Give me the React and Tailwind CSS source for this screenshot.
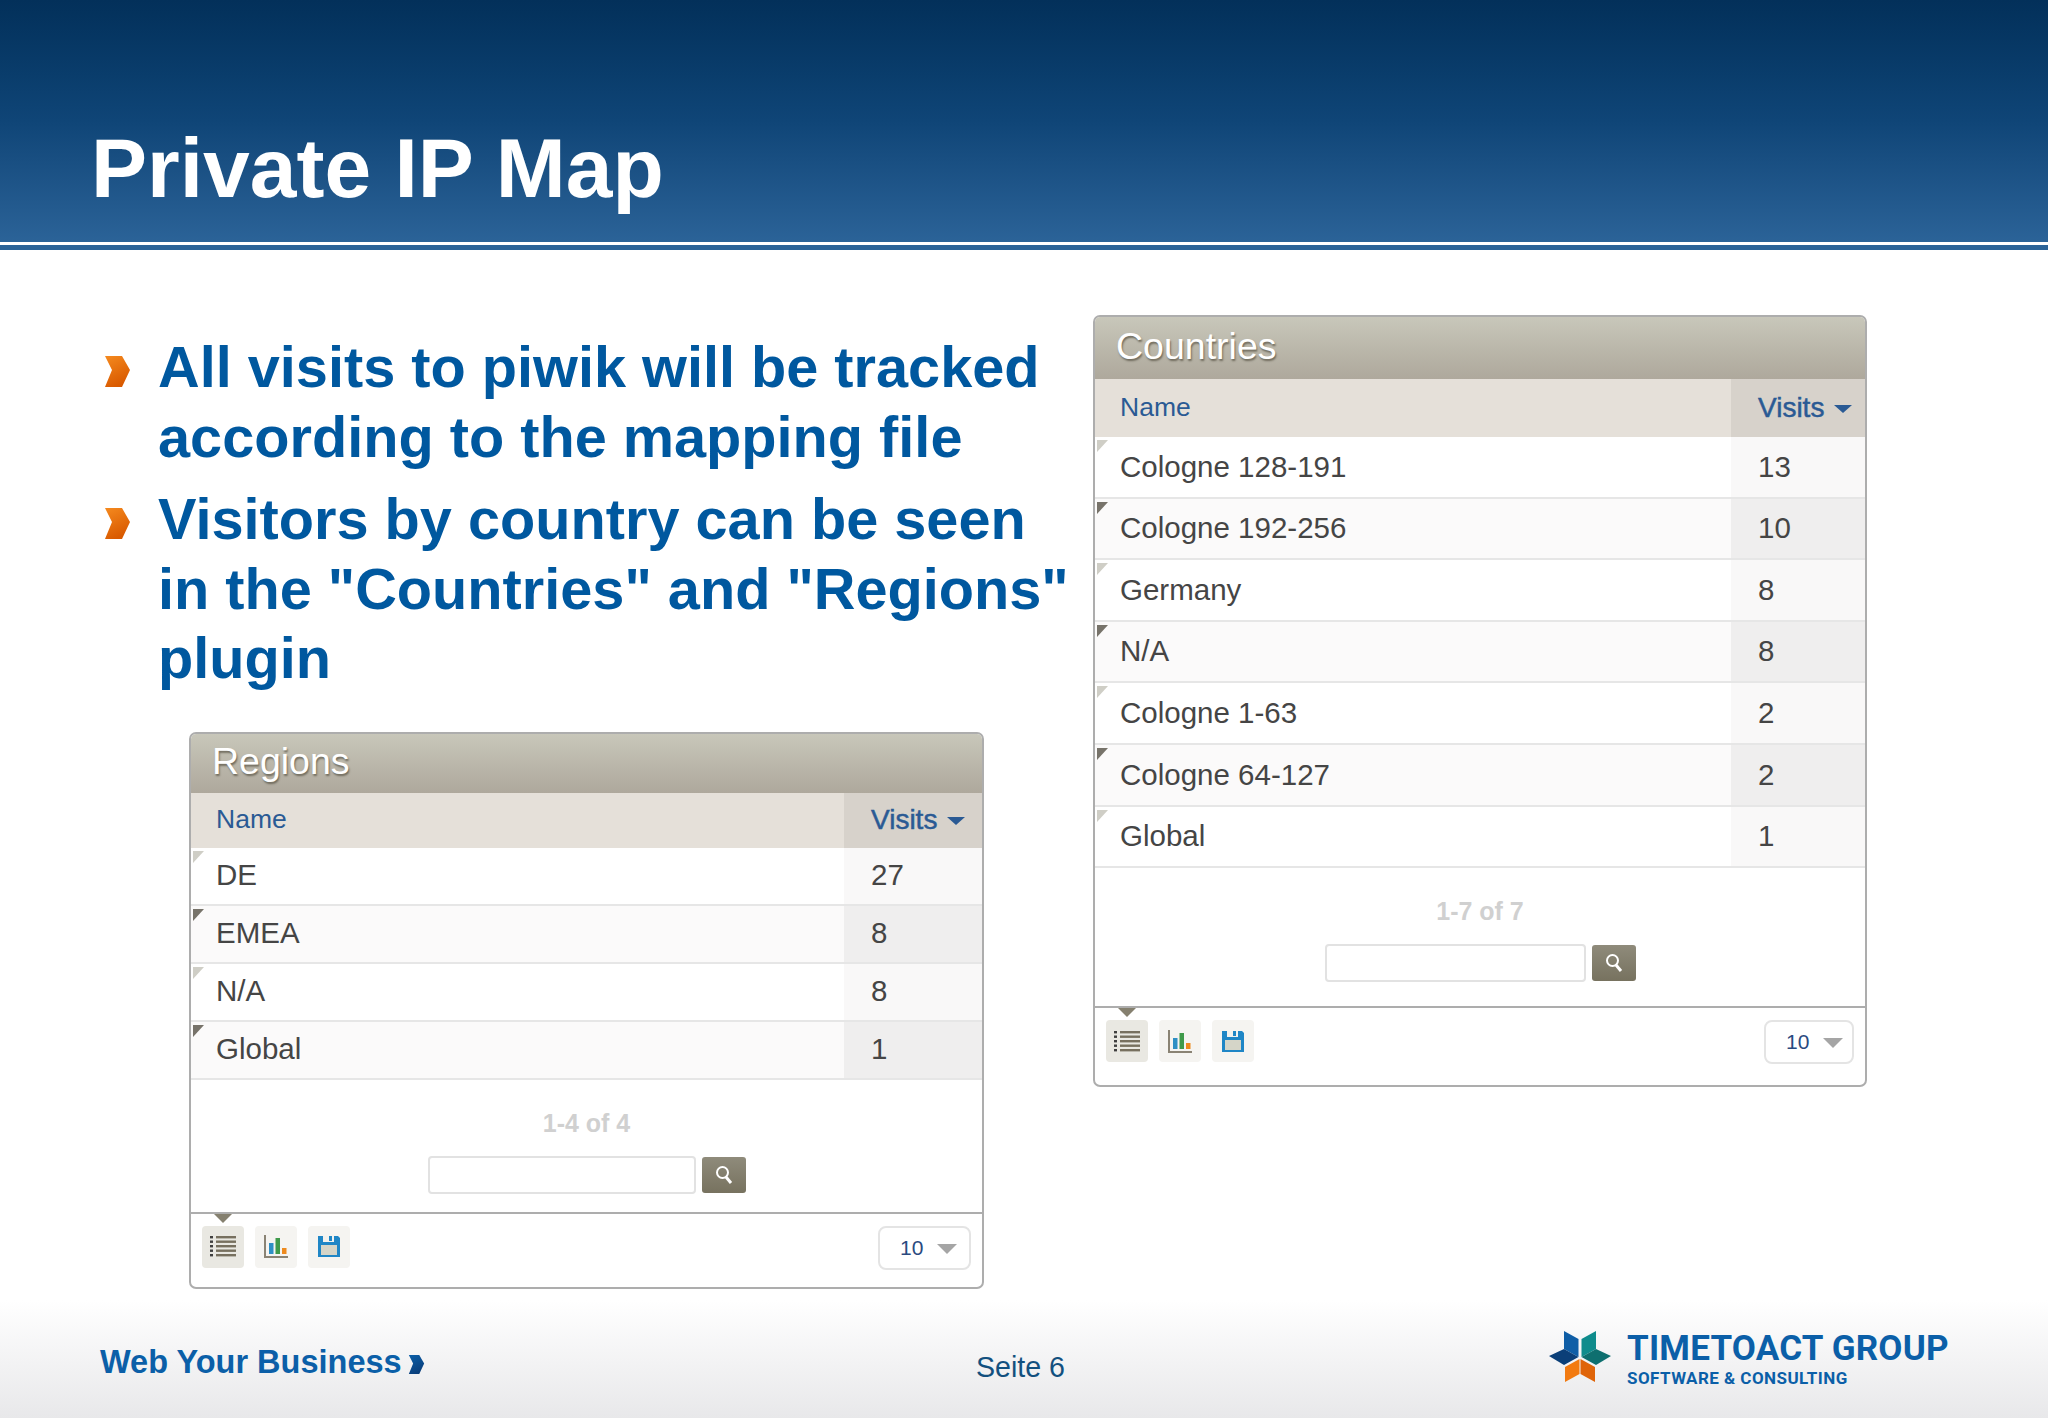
const countryRows = [
  ["Cologne 128-191", "13"],
  ["Cologne 192-256", "10"],
  ["Germany", "8"],
  ["N/A", "8"],
  ["Cologne 1-63", "2"],
  ["Cologne 64-127", "2"],
  ["Global", "1"],
];

const regionRows = [
  ["DE", "27"],
  ["EMEA", "8"],
  ["N/A", "8"],
  ["Global", "1"],
];

const Chevron = ({ className, from, to, id }) => (
  <svg viewBox="0 0 25 31" className={className}>
    <defs>
      <linearGradient id={id} x1="0" y1="0" x2="0.4" y2="1">
        <stop offset="0" stopColor={from} />
        <stop offset="1" stopColor={to} />
      </linearGradient>
    </defs>
    <path d="M0 0H17L25 14L17 31H0L7 14Z" fill={`url(#${id})`} />
  </svg>
);

const ListIcon = () => (
  <svg viewBox="0 0 26 21" className="h-[21px] w-[26px]">
    {[0, 4.5, 9, 13.5, 18].map((y) => (
      <g key={y}>
        <rect x="0" y={y} width="3" height="2.4" fill="#3f3f3f" />
        <rect x="6" y={y} width="20" height="2.4" fill="#77705f" />
      </g>
    ))}
  </svg>
);

const BarsIcon = () => (
  <svg viewBox="0 0 24 23" className="h-[23px] w-[24px]">
    <path d="M1 0V22H24" fill="none" stroke="#8a8374" strokeWidth="2" />
    <rect x="5" y="8" width="4.5" height="11" fill="#2e8fc4" />
    <rect x="11.5" y="3" width="4.5" height="16" fill="#3f9a4a" />
    <rect x="18" y="13" width="4.5" height="6" fill="#ee8a1e" />
  </svg>
);

const SaveIcon = () => (
  <svg viewBox="0 0 22 21" className="h-[21px] w-[22px]">
    <path d="M0 0H20L22 2V21H0Z" fill="#1f86c6" />
    <rect x="5" y="0" width="11" height="6" fill="#f3f2ee" />
    <rect x="11" y="0" width="3" height="5" fill="#1f86c6" />
    <rect x="3" y="9" width="16" height="10" fill="#d5d5c8" />
  </svg>
);

const SearchGlass = () => (
  <svg viewBox="0 0 18 20" className="h-[20px] w-[18px]">
    <circle cx="7.5" cy="7.5" r="5.5" fill="none" stroke="#fff" strokeWidth="2" />
    <path d="M11 12L16 18" stroke="#fff" strokeWidth="3" />
  </svg>
);

const Panel = ({ title, rows, total, rowClass, titleClass, headClass, colClass, inputClass, selectClass, toolbarClass, className }) => (
  <div
    className={`flex flex-col rounded-[7px] border-2 border-[#adadad] bg-white font-['Liberation_Sans',Arial,sans-serif] ${className}`}
  >
    <div
      className={`flex shrink-0 items-center rounded-t-[5px] bg-gradient-to-b from-[#c8c7ba] to-[#aea89c] pb-[3px] pl-[21px] text-[37.5px] text-white [text-shadow:1px_2px_2px_#6f6a5c] ${titleClass}`}
    >
      {title}
    </div>
    <div className={`flex shrink-0 bg-[#e5e0d9] text-[26.5px] text-[#2a5a94] ${headClass}`}>
      <div className="flex flex-1 items-center pl-[25px]">Name</div>
      <div className={`flex items-center bg-[#d7d2cb] pl-[27px] text-[28px] [-webkit-text-stroke:0.5px_#2a5a94] ${colClass}`}>
        Visits
        <span className="ml-[10px] mt-[2px] border-x-[9px] border-t-[8px] border-x-transparent border-t-[#2a5a94]" />
      </div>
    </div>
    {rows.map(([name, visits], i) => (
      <div
        key={name}
        className={`relative flex shrink-0 border-b-2 border-[#e6e6e6] text-[29.5px] text-[#454545] ${rowClass} ${i % 2 ? "bg-[#fbfafa]" : "bg-white"}`}
      >
        <span
          className={`absolute left-[2px] top-[3px] h-0 w-0 border-r-[11px] border-t-[12px] border-r-transparent ${i % 2 ? "border-t-[#77736a]" : "border-t-[#cfcec6]"}`}
        />
        <div className="flex flex-1 items-center pl-[25px]">{name}</div>
        <div className={`flex items-center pl-[27px] ${colClass} ${i % 2 ? "bg-[#efeeee]" : "bg-[#f9f8f8]"}`}>{visits}</div>
      </div>
    ))}
    <div className="flex flex-1 flex-col items-center pt-[30px]">
      <div className="text-[25px] font-bold leading-[26px] text-[#d0d0d0]">{total}</div>
      <div className="mt-[20px] flex items-center gap-[6px]">
        <div className={`h-[38px] rounded-[4px] border-2 border-[#e2e2e2] bg-white ${inputClass}`} />
        <div className="flex h-[36px] w-[44px] items-center justify-center rounded-[3px] bg-gradient-to-b from-[#8f8b7b] to-[#77725f]">
          <SearchGlass />
        </div>
      </div>
    </div>
    <div className={`relative flex shrink-0 items-start justify-between border-t-2 border-[#adadad] px-[11px] pt-[12px] ${toolbarClass}`}>
      <span className="absolute left-[23px] top-0 border-x-[9px] border-t-[9px] border-x-transparent border-t-[#85806f]" />
      <div className="flex gap-[11px]">
        <div className="flex h-[42px] w-[42px] items-center justify-center rounded-[4px] bg-[#e9e8e2]">
          <ListIcon />
        </div>
        <div className="flex h-[42px] w-[42px] items-center justify-center rounded-[4px] bg-[#f5f4f1]">
          <BarsIcon />
        </div>
        <div className="flex h-[42px] w-[42px] items-center justify-center rounded-[4px] bg-[#f5f4f1]">
          <SaveIcon />
        </div>
      </div>
      <div className={`flex h-[44px] items-center rounded-[8px] border-2 border-[#e4e4e4] pl-[20px] text-[21px] text-[#2a4a80] ${selectClass}`}>
        10
        <span className="ml-[14px] mt-[2px] border-x-[10px] border-t-[10px] border-x-transparent border-t-[#a5a5a5]" />
      </div>
    </div>
  </div>
);

const App = () => {
  return (
    <div className="flex h-[1418px] w-[2048px] flex-col overflow-hidden bg-white font-['Liberation_Sans',Arial,sans-serif]">
      <div className="flex h-[242px] shrink-0 items-end bg-gradient-to-b from-[#03305a] via-[#0f4577] to-[#2b6398] pb-[26px] pl-[91px]">
        <h1 className="text-[84px] font-bold leading-[96px] text-white">Private IP Map</h1>
      </div>
      <div className="h-[3px] shrink-0 bg-white" />
      <div className="h-[5px] shrink-0 bg-[#2b6398]" />

      <div className="flex flex-1 items-start pt-[68px]">
        <div className="w-[1093px] shrink-0">
          <ul className="mt-[15px] pl-[105px] text-[57.7px] font-bold leading-[69.5px] text-[#00589f]">
            <li className="flex">
              <Chevron id="b1" from="#f58a1f" to="#d95a00" className="mr-[28px] mt-[23px] h-[31px] w-[25px] shrink-0" />
              <span className="whitespace-nowrap">
                All visits to piwik will be tracked
                <br />
                according to the mapping file
              </span>
            </li>
            <li className="mt-[13px] flex">
              <Chevron id="b2" from="#f58a1f" to="#d95a00" className="mr-[28px] mt-[23px] h-[31px] w-[25px] shrink-0" />
              <span className="whitespace-nowrap">
                Visitors by country can be seen
                <br />
                in the "Countries" and "Regions"
                <br />
                plugin
              </span>
            </li>
          </ul>
          <Panel
            title="Regions"
            rows={regionRows}
            total="1-4 of 4"
            className="ml-[189px] mt-[38px] h-[557px] w-[795px]"
            titleClass="h-[59px]"
            headClass="h-[55px]"
            rowClass="h-[58px]"
            colClass="w-[138px]"
            inputClass="w-[268px]"
            selectClass="w-[93px]"
            toolbarClass="h-[75px]"
          />
        </div>
        <Panel
          title="Countries"
          rows={countryRows}
          total="1-7 of 7"
          className="mt-[-3px] h-[772px] w-[774px]"
          titleClass="h-[62px]"
          headClass="h-[58px]"
          rowClass="h-[61.6px]"
          colClass="w-[134px]"
          inputClass="w-[261px]"
          selectClass="w-[90px]"
          toolbarClass="h-[79px]"
        />
      </div>

      <div className="flex h-[118px] shrink-0 items-center bg-gradient-to-b from-white to-[#e8e8ea] pt-[6px]">
        <div className="flex w-[976px] items-center pl-[100px]">
          <span className="text-[32.5px] font-bold leading-none text-[#0b5fa8]">Web Your Business</span>
          <Chevron id="b3" from="#0b5fa8" to="#0a3f7c" className="ml-[6px] mt-[4px] h-[19px] w-[17px]" />
        </div>
        <div className="mt-[11px] w-[573px] text-[28.6px] text-[#12507f]">Seite 6</div>
        <div className="mb-[5px] flex items-center gap-[16px]">
          <svg viewBox="9 5 62 52" className="mb-[5px] h-[52px] w-[62px]">
            <path d="M24 5L38.5 13V31L24 23Z" fill="#0f5ea6" />
            <path d="M9 30L24 23L38.5 31L24 39Z" fill="#0b3f78" />
            <path d="M56 5L41.5 13V31L56 23Z" fill="#0f8c8c" />
            <path d="M71 30L56 23L41.5 31L56 39Z" fill="#0e6f6f" />
            <path d="M25 41L39.5 33V48L25 56Z" fill="#f27a10" />
            <path d="M55 41L40.5 33V48L55 56Z" fill="#df6409" />
          </svg>
          <div className="flex flex-col font-['Roboto',sans-serif] font-bold text-[#0b5fa8]">
            <span className="whitespace-nowrap text-[35px] leading-[36px] tracking-[0.2px]">TIMETOACT GROUP</span>
            <span className="mt-[1px] whitespace-nowrap text-[17px] leading-[20px] tracking-[0.45px]">SOFTWARE &amp; CONSULTING</span>
          </div>
        </div>
      </div>
    </div>
  );
};

export default App;
